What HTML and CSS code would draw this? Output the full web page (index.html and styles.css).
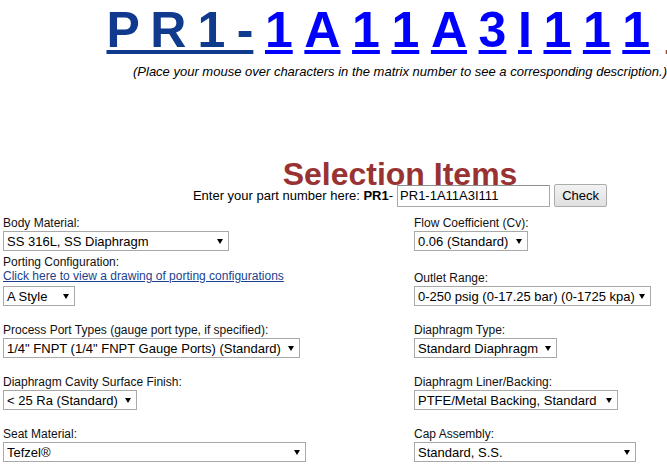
FILE: index.html
```html
<!DOCTYPE html>
<html lang="en">
<head>
  <meta charset="UTF-8" />
  <title>PR1 Part Number Builder</title>
  <link rel="stylesheet" href="styles.css">
</head>
<body>
  <div class="page">
    <div class="matrix">
      <a class="seg series" href="#">P R 1 -</a>
      <a class="seg" href="#" title="Body Material">1</a>
      <a class="seg" href="#" title="Porting Configuration">A</a>
      <a class="seg" href="#" title="Process Port Types">1</a>
      <a class="seg" href="#" title="Diaphragm Cavity Surface Finish">1</a>
      <a class="seg" href="#" title="Seat Material">A</a>
      <a class="seg" href="#" title="Flow Coefficient">3</a>
      <a class="seg" href="#" title="Outlet Range">I</a>
      <a class="seg" href="#" title="Diaphragm Type">1</a>
      <a class="seg" href="#" title="Diaphragm Liner/Backing">1</a>
      <a class="seg" href="#" title="Cap Assembly">1</a>
      <a class="seg option" href="#" title="Options">0</a>
    </div>
    <p class="hint">(Place your mouse over characters in the matrix number to see a corresponding description.)</p>

    <h1 class="heading">Selection Items</h1>
    <form class="entry" id="partForm">
      <span class="entry-label">Enter your part number here: <b>PR1</b>-</span>
      <input type="text" id="partNumber" class="part-input" value="PR1-1A11A3I111">
      <button type="submit" class="check-btn">Check</button>
    </form>

    <div class="fields">
      <div class="cell">
        <div class="field">
          <label class="field-label">Body Material:</label>
          <span class="pick"><select class="w-body">
            <option>SS 316L, SS Diaphragm</option>
            <option>SS 316L, Hastelloy C-276 Diaphragm</option>
          </select></span>
        </div>
        <div class="field porting">
          <label class="field-label">Porting Configuration:</label>
          <a class="drawing-link" href="#">Click here to view a drawing of porting configurations</a>
          <span class="pick tight"><select class="w-style">
            <option>A Style</option>
            <option>B Style</option>
          </select></span>
        </div>
      </div>
      <div class="cell stack">
        <div class="field">
          <label class="field-label">Flow Coefficient (Cv):</label>
          <span class="pick"><select class="w-flow">
            <option>0.06 (Standard)</option>
          </select></span>
        </div>
        <div class="field">
          <label class="field-label">Outlet Range:</label>
          <span class="pick"><select class="w-outlet">
            <option>0-250 psig (0-17.25 bar) (0-1725 kpa)</option>
          </select></span>
        </div>
      </div>

      <div class="field">
        <label class="field-label">Process Port Types (gauge port type, if specified):</label>
        <span class="pick"><select class="w-port">
          <option>1/4" FNPT (1/4" FNPT Gauge Ports) (Standard)</option>
        </select></span>
      </div>
      <div class="field">
        <label class="field-label">Diaphragm Type:</label>
        <span class="pick"><select class="w-dtype">
          <option>Standard Diaphragm</option>
        </select></span>
      </div>

      <div class="field">
        <label class="field-label">Diaphragm Cavity Surface Finish:</label>
        <span class="pick"><select class="w-finish">
          <option>&lt; 25 Ra (Standard)</option>
        </select></span>
      </div>
      <div class="field">
        <label class="field-label">Diaphragm Liner/Backing:</label>
        <span class="pick"><select class="w-liner">
          <option>PTFE/Metal Backing, Standard</option>
        </select></span>
      </div>

      <div class="field">
        <label class="field-label">Seat Material:</label>
        <span class="pick"><select class="w-seat">
          <option>Tefzel&reg;</option>
          <option>PCTFE</option>
        </select></span>
      </div>
      <div class="field">
        <label class="field-label">Cap Assembly:</label>
        <span class="pick"><select class="w-cap">
          <option>Standard, S.S.</option>
        </select></span>
      </div>
    </div>
  </div>
</body>
</html>
```

FILE: styles.css
```css
html {
  overflow: hidden;
}

body {
  margin: 0;
  background: #fff;
  color: #000;
  font-family: "Liberation Sans", Arial, sans-serif;
}

.page {
  width: 800px;
}

.matrix {
  display: flex;
  justify-content: center;
  gap: 11.6px;
  margin-top: 2px;
  font-size: 50px;
  font-weight: bold;
  line-height: 56px;
  white-space: nowrap;
}

.seg {
  color: #0000ff;
  text-decoration: underline;
  text-decoration-thickness: 4px;
  text-underline-offset: 3px;
}

.series {
  color: #0f3a8e;
  word-spacing: -2.6px;
}

.option {
  margin-left: 4px;
  color: #a0522d;
}

.hint {
  margin: 6px 0 0;
  text-align: center;
  font-size: 13px;
  font-style: italic;
  line-height: 15px;
}

.heading {
  margin: 86px 0 0;
  text-align: center;
  font-size: 32px;
  line-height: 19px;
  color: #993333;
}

.entry {
  display: flex;
  justify-content: center;
  align-items: center;
  gap: 4px;
  margin: 0;
  font-size: 13px;
  line-height: 15px;
}

.part-input {
  width: 153px;
  height: 22px;
  box-sizing: border-box;
  padding: 1px 2px;
  border: 1px solid #a9a9a9;
  border-top-color: #8f8f8f;
  font: 13px "Liberation Sans", Arial, sans-serif;
}

.check-btn {
  width: 53px;
  height: 23px;
  padding: 0;
  border: 1px solid #acacac;
  border-radius: 2px;
  background: linear-gradient(#f2f2f2, #e0e0e0);
  font: 13px "Liberation Sans", Arial, sans-serif;
  color: #000;
}

.fields {
  display: grid;
  grid-template-columns: 411px auto;
  row-gap: 17px;
  margin-top: 9px;
  padding-left: 3px;
}

.cell {
  display: flex;
  flex-direction: column;
}

.stack {
  justify-content: space-between;
}

.field {
  display: flex;
  flex-direction: column;
  align-items: flex-start;
}

.porting {
  margin-top: 4px;
}

.field-label {
  font-size: 12px;
  line-height: 14px;
  color: #111;
}

.drawing-link {
  font-size: 12px;
  line-height: 15px;
  color: #1a3f8f;
}

.pick {
  position: relative;
  display: inline-block;
  margin-top: 1px;
}

.pick.tight {
  margin-top: 2px;
}

.pick::after {
  content: "";
  position: absolute;
  right: 6px;
  top: 8px;
  border-left: 3px solid transparent;
  border-right: 3px solid transparent;
  border-top: 5px solid #000;
  pointer-events: none;
}

select {
  -webkit-appearance: none;
  appearance: none;
  display: block;
  height: 20px;
  box-sizing: border-box;
  padding: 0 14px 0 3px;
  border: 1px solid #a9a9a9;
  border-radius: 0;
  background: #fff;
  font: 13px "Liberation Sans", Arial, sans-serif;
  color: #000;
}

.w-body { width: 226px; }
.w-style { width: 72px; }
.w-port { width: 297px; }
.w-finish { width: 134px; }
.w-seat { width: 303px; }
.w-flow { width: 114px; }
.w-outlet { width: 237px; }
.w-dtype { width: 143px; }
.w-liner { width: 204px; }
.w-cap { width: 222px; }
```
